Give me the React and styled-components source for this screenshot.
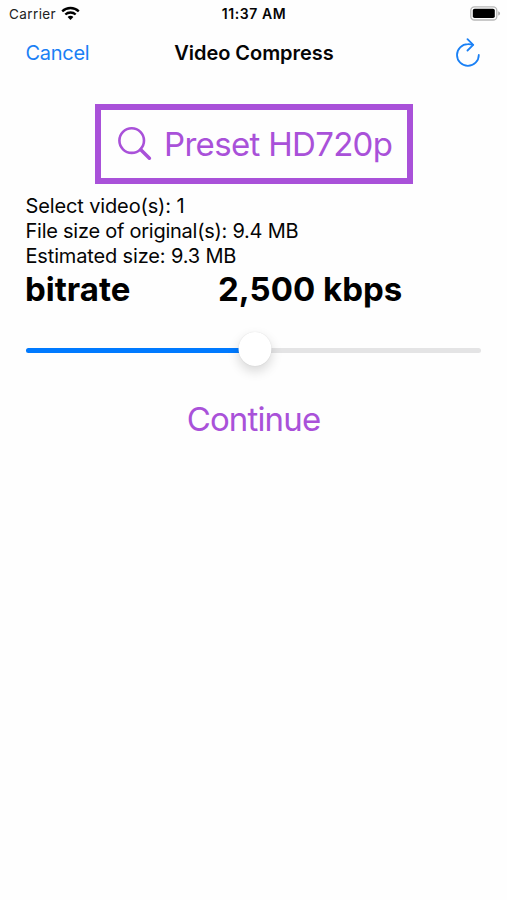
import styled, { createGlobalStyle } from 'styled-components';

const App = () => {
    const value = 50;

    return (
  <Screen>
    <GlobalStyle />
    <StatusBar>
      <Carrier>
        <CarrierName>Carrier</CarrierName>
        <WifiIcon />
      </Carrier>
      <Time>11:37 AM</Time>
      <BatteryIcon />
    </StatusBar>
    <NavBar>
      <Cancel>Cancel</Cancel>
      <Title>Video Compress</Title>
      <Reload aria-label="Reload">
        <ReloadIcon />
      </Reload>
    </NavBar>
    <Content>
      <PresetButton>
        <SearchIcon />
        <PresetLabel>Preset HD720p</PresetLabel>
      </PresetButton>
      <Info>
        <Line $spacing="-0.13px">Select video(s): 1</Line>
        <Line $spacing="-0.25px">File size of original(s): 9.4 MB</Line>
        <Line $spacing="-0.15px">Estimated size: 9.3 MB</Line>
      </Info>
      <Bitrate>
        <BitrateText>bitrate</BitrateText>
        <BitrateText>2,500 kbps</BitrateText>
      </Bitrate>
      <Slider>
        <Track>
          <Fill style={{ width: `${value}%` }} />
        </Track>
        <Thumb style={{ left: `${value}%` }} />
      </Slider>
      <Continue>Continue</Continue>
    </Content>
  </Screen>
    );
};

const WifiIcon = () => (
  <svg width="19" height="15" viewBox="0 0 19 15" fill="none" stroke="#000" strokeWidth="2.3">
    <path d="M1.2 5.3C5.8 0.9 13.2 0.9 17.8 5.3" />
    <path d="M4.3 8.5C7.2 5.8 11.8 5.8 14.7 8.5" />
    <path d="M9.5 13.9L6.6 10.9C8.2 9.4 10.8 9.4 12.4 10.9Z" fill="#000" stroke="none" />
  </svg>
);

const BatteryIcon = () => (
  <svg width="31" height="15" viewBox="0 0 31 15">
    <rect x="0.8" y="0.8" width="26" height="13.2" rx="3.6" fill="#fff" stroke="#b8b8b8" strokeWidth="1.3" />
    <rect x="2.8" y="2.7" width="22" height="9.4" rx="1.8" fill="#000" />
    <path d="M28.2 5.2C30.7 6 30.7 8.8 28.2 9.6Z" fill="#b0b0b0" />
  </svg>
);

const ReloadIcon = () => (
  <svg width="26" height="30" viewBox="0 0 26 30" fill="none" stroke="#1a80f5" strokeWidth="1.8" strokeLinecap="round" strokeLinejoin="round">
    <path d="M23.8 17A10.9 10.9 0 1 1 12.9 6.1Q15.4 6 17.8 6.8" />
    <path d="M12.5 1.2L18.2 6.9L12.5 12.5" />
  </svg>
);

const SearchIcon = () => (
  <svg width="34" height="34" viewBox="0 0 34 34" fill="none" stroke="#a951d9" strokeLinecap="round">
    <circle cx="13.7" cy="13.6" r="12.3" strokeWidth="2.6" />
    <path d="M22.8 22.7L31.4 31.2" strokeWidth="3.5" />
  </svg>
);

const GlobalStyle = createGlobalStyle`
  body {
    margin: 0;
    background: #fefefe;
  }
`;

const Screen = styled.main`
  width: 507px;
  height: 900px;
  overflow: hidden;
  background: #fefefe;
  color: #050505;
  font-family: Inter, "Liberation Sans", sans-serif;
`;

const StatusBar = styled.div`
  display: grid;
  grid-template-columns: 1fr auto 1fr;
  align-items: center;
  height: 27px;
  padding: 0 6px 0 9px;
  font-size: 13.5px;
  line-height: 16px;

  > svg {
    justify-self: end;
  }
`;

const Carrier = styled.div`
  display: flex;
  align-items: center;
  gap: 5px;
`;

const CarrierName = styled.span`
  color: #222;
  letter-spacing: 0.4px;
`;

const Time = styled.span`
  margin-right: 2px;
  font-size: 14px;
  font-weight: 600;
  letter-spacing: 0.55px;
`;

const NavBar = styled.header`
  display: grid;
  grid-template-columns: 1fr auto 1fr;
  align-items: center;
  height: 52px;
  padding: 0 26px;
  font-size: 20px;
  line-height: 24px;
`;

const Button = styled.button`
  border: none;
  padding: 0;
  background: none;
  font: inherit;
  cursor: pointer;
`;

const Cancel = styled(Button)`
  justify-self: start;
  margin-left: -0.5px;
  color: #1a80f5;
  letter-spacing: -0.3px;
`;

const Title = styled.h1`
  margin: 0 0 0 1px;
  font-size: 20px;
  font-weight: 600;
  letter-spacing: -0.05px;
`;

const Reload = styled(Button)`
  display: flex;
  justify-self: end;
`;

const Content = styled.section`
  display: flex;
  flex-direction: column;
  padding: 25px 26px 0;
`;

const PresetButton = styled(Button)`
  display: flex;
  align-self: center;
  align-items: center;
  gap: 12px;
  box-sizing: border-box;
  width: 318px;
  height: 80px;
  margin-left: 1px;
  padding: 0 0 0 17px;
  border: 6px solid #a951d9;
  color: #a951d9;
`;

const PresetLabel = styled.span`
  font-size: 33px;
  font-weight: 400;
  letter-spacing: -0.68px;
  line-height: 40px;
  white-space: nowrap;
`;

const Info = styled.div`
  margin-top: 10px;
`;

const Line = styled.p`
  margin: 0 0 0 -0.5px;
  font-size: 20px;
  line-height: 25px;
  letter-spacing: ${(props) => props.$spacing};
`;

const Bitrate = styled.div`
  display: grid;
  grid-template-columns: 193px 1fr;
  margin-left: -1px;
`;

const BitrateText = styled.strong`
  font-size: 33px;
  font-weight: 700;
  line-height: 41px;
  color: #000;
`;

const Slider = styled.div`
  position: relative;
  display: flex;
  align-items: center;
  height: 34px;
  margin-top: 23px;
`;

const Track = styled.div`
  width: 100%;
  height: 5px;
  border-radius: 3px;
  background: #e4e4e5;
`;

const Fill = styled.div`
  height: 100%;
  border-radius: 3px;
  background: #007aff;
`;

const Thumb = styled.div`
  position: absolute;
  top: -1px;
  width: 33px;
  height: 34px;
  margin-left: 1px;
  border-radius: 50%;
  background: #fff;
  box-shadow: 0 0 1px rgba(0, 0, 0, 0.15), 0 5px 12px rgba(0, 0, 0, 0.16);
  transform: translateX(-50%);
`;

const Continue = styled(Button)`
  align-self: center;
  margin-top: 32px;
  color: #a951d9;
  font-size: 33px;
  font-weight: 400;
  letter-spacing: -0.85px;
  line-height: 40px;
`;

export default App;
